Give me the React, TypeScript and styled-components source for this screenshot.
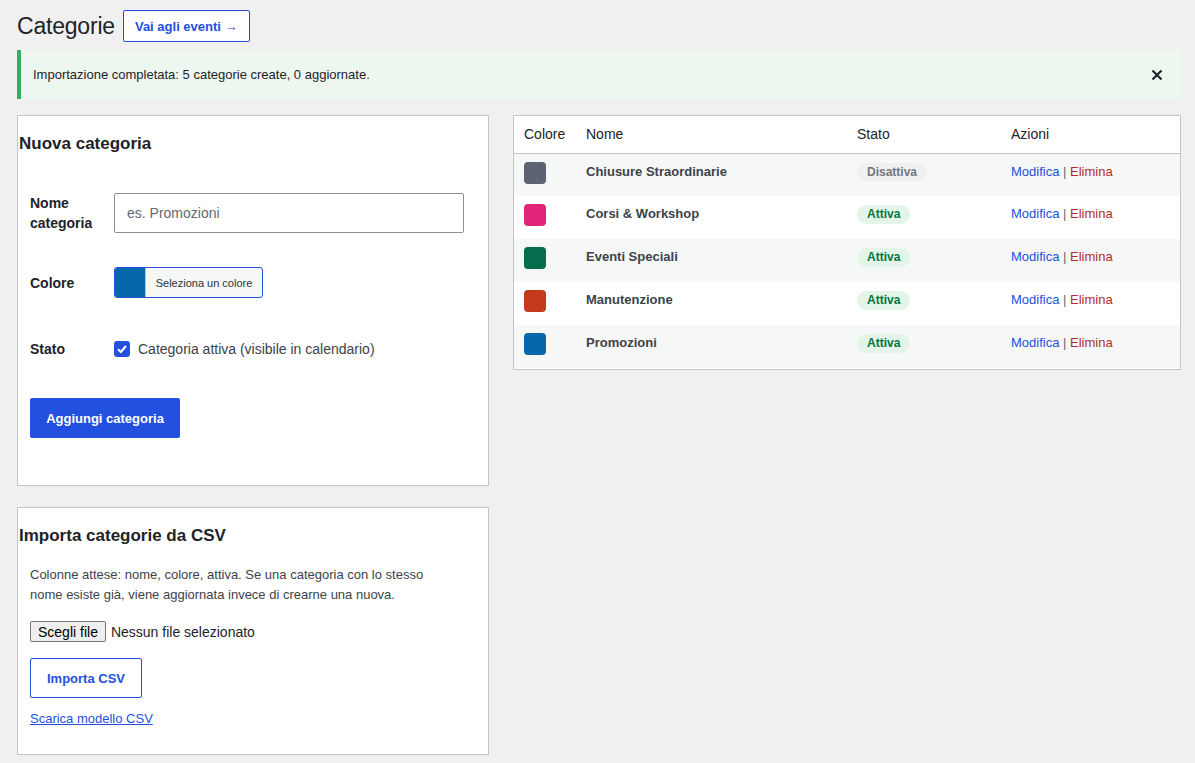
import React from 'react';
import styled, { createGlobalStyle } from 'styled-components';

const BLUE = '#2450e0';
const TEXT = '#1d2327';
const BODY_TEXT = '#3c434a';
const BORDER = '#c3c4c7';

const GlobalStyle = createGlobalStyle`
    html, body {
        margin: 0;
        background: #f0f0f1;
        font-family: "Liberation Sans", Arial, sans-serif;
        color: ${TEXT};
    }
    * { box-sizing: border-box; }
`;

const Wrap = styled.div`
    padding: 10px 14px 20px 17px;
`;

const Header = styled.div`
    display: flex;
    align-items: center;
    gap: 8px;
    height: 32px;
`;

const Title = styled.h1`
    margin: 0;
    font-size: 23px;
    font-weight: 400;
    line-height: 32px;
    letter-spacing: -0.2px;
    color: ${TEXT};
`;

const OutlineButton = styled.button<{ $h?: number; $w?: number }>`
    display: inline-flex;
    align-items: center;
    justify-content: center;
    height: ${(p) => p.$h ?? 32}px;
    ${(p) => (p.$w ? `width: ${p.$w}px;` : 'padding: 0 11px;')}
    background: #fff;
    border: 1px solid ${BLUE};
    border-radius: 2px;
    color: ${BLUE};
    font-family: inherit;
    font-size: 13px;
    font-weight: 600;
    cursor: pointer;
`;

const Notice = styled.div`
    margin-top: 8px;
    display: flex;
    align-items: center;
    justify-content: space-between;
    height: 49px;
    padding: 0 18px 0 12px;
    background: #edf7ef;
    border-left: 4px solid #2fb35f;
    font-size: 13px;
    color: ${TEXT};
`;

const CloseButton = styled.button`
    border: 0;
    background: none;
    padding: 0;
    display: flex;
    color: ${TEXT};
    cursor: pointer;
`;

const Columns = styled.div`
    margin-top: 16px;
    display: grid;
    grid-template-columns: 472px 1fr;
    gap: 24px;
    align-items: start;
`;

const LeftColumn = styled.div`
    display: flex;
    flex-direction: column;
    gap: 21px;
`;

const Card = styled.section<{ $h: number }>`
    background: #fff;
    border: 1px solid ${BORDER};
    height: ${(p) => p.$h}px;
`;

const CardTitle = styled.h2`
    margin: 17px 0 0 1px;
    font-size: 17px;
    font-weight: 600;
    line-height: 22px;
    color: ${TEXT};
`;

const CardBody = styled.div<{ $top: number }>`
    padding: ${(p) => p.$top}px 12px 0 12px;
`;

const FormRow = styled.div<{ $h: number }>`
    display: grid;
    grid-template-columns: 84px 1fr;
    align-items: center;
    height: ${(p) => p.$h}px;
`;

const Label = styled.label`
    font-size: 14px;
    font-weight: 600;
    line-height: 20px;
    color: ${TEXT};
`;

const TextInput = styled.input`
    width: 350px;
    height: 40px;
    padding: 0 12px;
    border: 1px solid #8c8f94;
    border-radius: 2px;
    font-family: inherit;
    font-size: 14px;
    color: ${TEXT};
    &::placeholder { color: #646970; }
`;

const ColorPicker = styled.button`
    display: flex;
    align-items: stretch;
    width: 149px;
    height: 31px;
    padding: 0;
    border: 1px solid ${BLUE};
    border-radius: 3px;
    background: #f6f7f7;
    overflow: hidden;
    cursor: pointer;
`;

const PickerSwatch = styled.span<{ $c: string }>`
    width: 31px;
    background: ${(p) => p.$c};
    border-right: 1px solid #c3c4c7;
`;

const PickerText = styled.span`
    flex: 1;
    display: flex;
    align-items: center;
    justify-content: center;
    font-family: inherit;
    font-size: 11px;
    color: #2c3338;
`;

const CheckLabel = styled.label`
    display: flex;
    align-items: center;
    gap: 8px;
    font-size: 14px;
    color: ${BODY_TEXT};
`;

const CheckBox = styled.span`
    width: 16px;
    height: 16px;
    border-radius: 3px;
    background: ${BLUE};
    display: flex;
    align-items: center;
    justify-content: center;
`;

const PrimaryButton = styled.button`
    margin-top: 13px;
    width: 150px;
    height: 40px;
    background: ${BLUE};
    border: 0;
    border-radius: 2px;
    color: #fff;
    font-family: inherit;
    font-size: 13px;
    font-weight: 600;
    cursor: pointer;
`;

const Help = styled.p`
    margin: 0;
    max-width: 410px;
    font-size: 13px;
    line-height: 20px;
    color: ${BODY_TEXT};
`;

const FileRow = styled.div`
    margin-top: 16px;
    display: flex;
    align-items: center;
    gap: 5px;
    font-size: 14px;
    color: ${TEXT};
`;

const FileButton = styled.button`
    height: 21px;
    padding: 0 7px;
    border: 1px solid #767676;
    border-radius: 2px;
    background: #efefef;
    font-family: inherit;
    font-size: 14px;
    color: #000;
`;

const ButtonRow = styled.div`
    margin-top: 16px;
`;

const TemplateLink = styled.a`
    display: inline-block;
    margin-top: 13px;
    font-size: 13px;
    color: ${BLUE};
    text-decoration: underline;
`;

const TableBox = styled.div`
    background: #fff;
    border: 1px solid ${BORDER};
    padding-bottom: 1px;
`;

const Table = styled.table`
    width: 100%;
    border-collapse: collapse;
    table-layout: fixed;
`;

const Th = styled.th<{ $w?: number }>`
    ${(p) => (p.$w ? `width: ${p.$w}px;` : '')}
    padding: 8px 10px;
    height: 37px;
    text-align: left;
    font-size: 14px;
    font-weight: 400;
    line-height: 20px;
    color: ${TEXT};
    border-bottom: 1px solid ${BORDER};
`;

const Tr = styled.tr<{ $odd: boolean }>`
    height: 43px;
    background: ${(p) => (p.$odd ? '#f6f7f7' : '#fff')};
`;

const Td = styled.td`
    padding: 8px 10px;
    vertical-align: top;
    font-size: 13px;
    line-height: 20px;
    color: ${BODY_TEXT};
`;

const Swatch = styled.span<{ $c: string }>`
    display: block;
    width: 22px;
    height: 22px;
    border-radius: 4px;
    background: ${(p) => p.$c};
`;

const Name = styled.strong`
    display: block;
    font-weight: 600;
    line-height: 20px;
`;

const Badge = styled.span<{ $on: boolean }>`
    display: inline-block;
    height: 19px;
    line-height: 19px;
    padding: 0 10px;
    border-radius: 10px;
    font-size: 12px;
    font-weight: 600;
    background: ${(p) => (p.$on ? '#e3f5e9' : '#f0f0f1')};
    color: ${(p) => (p.$on ? '#07743a' : '#72777c')};
`;

const Actions = styled.span`
    display: block;
    line-height: 20px;
    color: #646970;
`;

const ActionLink = styled.a<{ $danger?: boolean }>`
    color: ${(p) => (p.$danger ? '#b32d2e' : BLUE)};
    text-decoration: none;
`;

const categories = [
    { nome: 'Chiusure Straordinarie', colore: '#5d6371', attiva: false },
    { nome: 'Corsi & Workshop', colore: '#e0257a', attiva: true },
    { nome: 'Eventi Speciali', colore: '#036d4e', attiva: true },
    { nome: 'Manutenzione', colore: '#c43a1c', attiva: true },
    { nome: 'Promozioni', colore: '#0866ab', attiva: true },
];

export default function App() {
    return (
        <>
            <GlobalStyle />
            <Wrap>
                <Header>
                    <Title>Categorie</Title>
                    <OutlineButton>Vai agli eventi →</OutlineButton>
                </Header>

                <Notice>
                    <span>Importazione completata: 5 categorie create, 0 aggiornate.</span>
                    <CloseButton aria-label="Chiudi">
                        <svg width="12" height="12" viewBox="0 0 12 12">
                            <path d="M1.5 1.5 L10.5 10.5 M10.5 1.5 L1.5 10.5" stroke="currentColor" strokeWidth="2.2" />
                        </svg>
                    </CloseButton>
                </Notice>

                <Columns>
                    <LeftColumn>
                        <Card $h={371}>
                            <CardTitle>Nuova categoria</CardTitle>
                            <CardBody $top={18}>
                                <FormRow $h={79}>
                                    <Label>Nome categoria</Label>
                                    <TextInput placeholder="es. Promozioni" />
                                </FormRow>
                                <FormRow $h={61}>
                                    <Label>Colore</Label>
                                    <div>
                                        <ColorPicker>
                                            <PickerSwatch $c="#0866ab" />
                                            <PickerText>Seleziona un colore</PickerText>
                                        </ColorPicker>
                                    </div>
                                </FormRow>
                                <FormRow $h={72}>
                                    <Label>Stato</Label>
                                    <CheckLabel>
                                        <CheckBox>
                                            <svg width="12" height="12" viewBox="0 0 12 12">
                                                <path d="M2 6.3 L4.8 9 L10 3" fill="none" stroke="#fff" strokeWidth="2" />
                                            </svg>
                                        </CheckBox>
                                        Categoria attiva (visibile in calendario)
                                    </CheckLabel>
                                </FormRow>
                                <PrimaryButton>Aggiungi categoria</PrimaryButton>
                            </CardBody>
                        </Card>

                        <Card $h={248}>
                            <CardTitle>Importa categorie da CSV</CardTitle>
                            <CardBody $top={18}>
                                <Help>
                                    Colonne attese: nome, colore, attiva. Se una categoria con lo stesso
                                    nome esiste già, viene aggiornata invece di crearne una nuova.
                                </Help>
                                <FileRow>
                                    <FileButton>Scegli file</FileButton>
                                    <span>Nessun file selezionato</span>
                                </FileRow>
                                <ButtonRow>
                                    <OutlineButton $h={40} $w={112}>Importa CSV</OutlineButton>
                                </ButtonRow>
                                <TemplateLink href="#">Scarica modello CSV</TemplateLink>
                            </CardBody>
                        </Card>
                    </LeftColumn>

                    <TableBox>
                        <Table>
                            <thead>
                                <tr>
                                    <Th $w={62}>Colore</Th>
                                    <Th $w={271}>Nome</Th>
                                    <Th $w={154}>Stato</Th>
                                    <Th>Azioni</Th>
                                </tr>
                            </thead>
                            <tbody>
                                {categories.map((c, i) => (
                                    <Tr key={c.nome} $odd={i % 2 === 0}>
                                        <Td><Swatch $c={c.colore} /></Td>
                                        <Td><Name>{c.nome}</Name></Td>
                                        <Td><Badge $on={c.attiva}>{c.attiva ? 'Attiva' : 'Disattiva'}</Badge></Td>
                                        <Td>
                                            <Actions>
                                                <ActionLink href="#">Modifica</ActionLink> |{' '}
                                                <ActionLink href="#" $danger>Elimina</ActionLink>
                                            </Actions>
                                        </Td>
                                    </Tr>
                                ))}
                            </tbody>
                        </Table>
                    </TableBox>
                </Columns>
            </Wrap>
        </>
    );
}
